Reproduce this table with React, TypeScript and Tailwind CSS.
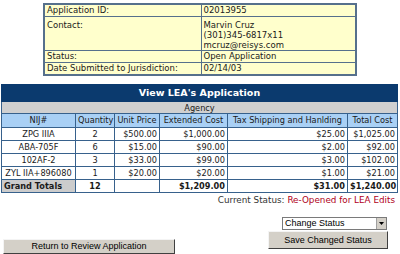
import React from "react";

const rows = [
  ["ZPG IIIA", "2", "$500.00", "$1,000.00", "$25.00", "$1,025.00"],
  ["ABA-705F", "6", "$15.00", "$90.00", "$2.00", "$92.00"],
  ["102AF-2", "3", "$33.00", "$99.00", "$3.00", "$102.00"],
  ["ZYL IIA+896080", "1", "$20.00", "$20.00", "$1.00", "$21.00"],
];

export default function App() {
  const td = "border border-[#37618c] px-[2px] h-[13px] leading-[11px] p-0 whitespace-nowrap overflow-hidden";
  const tc = "border border-[#56708c] px-[2px] leading-[10px] whitespace-nowrap";
  return (
    <div
      className="w-[400px] h-[254px] bg-white overflow-hidden text-[#1a1a1a]"
      style={{ fontFamily: '"DejaVu Sans", Verdana, sans-serif' }}
    >
      <table className="ml-[43px] mt-[3px] w-[314px] border-collapse border-2 border-[#56708c] text-[8.5px] bg-[#ffffcc]">
        <tbody>
          <tr>
            <td className={tc + " w-[157px] h-[12px]"}>Application ID:</td>
            <td className={tc}>02013955</td>
          </tr>
          <tr>
            <td className={tc + " h-[33px] align-top pt-[3px]"}>Contact:</td>
            <td className={tc + " align-top pt-[3px]"}>
              Marvin Cruz
              <br />
              (301)345-6817x11
              <br />
              mcruz@reisys.com
            </td>
          </tr>
          <tr>
            <td className={tc + " h-[12px]"}>Status:</td>
            <td className={tc}>Open Application</td>
          </tr>
          <tr>
            <td className={tc + " h-[13px]"}>Date Submitted to Jurisdiction:</td>
            <td className={tc}>02/14/03</td>
          </tr>
        </tbody>
      </table>

      <table className="ml-[1px] mt-[8px] w-[396px] border-collapse text-[8.2px] table-fixed">
        <colgroup>
          <col className="w-[74px]" />
          <col className="w-[39px]" />
          <col className="w-[45px]" />
          <col className="w-[68px]" />
          <col className="w-[120px]" />
          <col className="w-[50px]" />
        </colgroup>
        <tbody>
          <tr>
            <td colSpan={6} className="bg-[#0b3a6e] text-white font-bold text-center text-[9.5px] h-[17px] leading-[12px] border border-[#0b3a6e]">
              View LEA's Application
            </td>
          </tr>
          <tr>
            <td colSpan={6} className="bg-[#d0d0d0] text-center h-[12px] leading-[10px] border border-[#37618c]">
              Agency
            </td>
          </tr>
          <tr className="bg-[#a9d0f5] text-center">
            <td className={td + " h-[14px]"}>NIJ#</td>
            <td className={td}>Quantity</td>
            <td className={td}>Unit Price</td>
            <td className={td}>Extended Cost</td>
            <td className={td}>Tax Shipping and Hanlding</td>
            <td className={td}>Total Cost</td>
          </tr>
          {rows.map((r) => (
            <tr key={r[0]}>
              <td className={td + " text-center"}>{r[0]}</td>
              <td className={td + " text-center"}>{r[1]}</td>
              <td className={td + " text-right"}>{r[2]}</td>
              <td className={td + " text-right"}>{r[3]}</td>
              <td className={td + " text-right"}>{r[4]}</td>
              <td className={td + " text-right"}>{r[5]}</td>
            </tr>
          ))}
          <tr className="font-bold">
            <td className={td + " bg-[#cccccc] text-left"}>Grand Totals</td>
            <td className={td + " text-center"}>12</td>
            <td className={td}></td>
            <td className={td + " text-right"}>$1,209.00</td>
            <td className={td + " text-right"}>$31.00</td>
            <td className={td + " text-right"}>$1,240.00</td>
          </tr>
        </tbody>
      </table>

      <div className="mt-[2px] pr-[5px] text-right text-[8.8px] leading-[11px] h-[11px]">
        <span className="text-[#333333]">Current Status: </span>
        <span className="text-[#b0001a]">Re-Opened for LEA Edits</span>
      </div>

      <div className="flex justify-between items-start pl-[3px] pr-[12px] mt-[11px]" style={{ fontFamily: '"Liberation Sans", Arial, sans-serif' }}>
        <button className="mt-[22px] w-[172px] h-[15px] bg-[#d4d0c8] border border-t-[#f4f4f4] border-l-[#f4f4f4] border-r-[#404040] border-b-[#404040] text-[9px] leading-[13px] text-black text-center">
          Return to Review Application
        </button>
        <div className="flex flex-col items-end">
          <div className="w-[105px] h-[13px] border border-[#7a7a7a] bg-white flex items-center justify-between text-[9px] leading-[11px] text-black mr-[1px]">
            <span className="pl-[2px]">Change Status</span>
            <span className="w-[10px] h-[11px] bg-[#d4d0c8] border-l border-[#a0a0a0] flex items-center justify-center">
              <svg width="5" height="3" viewBox="0 0 5 3"><path d="M0 0h5L2.5 3z" fill="#000" /></svg>
            </span>
          </div>
          <button className="mt-[1px] w-[120px] h-[18px] bg-[#d4d0c8] border border-t-[#f4f4f4] border-l-[#f4f4f4] border-r-[#404040] border-b-[#404040] text-[9px] leading-[16px] text-black text-center">
            Save Changed Status
          </button>
        </div>
      </div>
    </div>
  );
}
